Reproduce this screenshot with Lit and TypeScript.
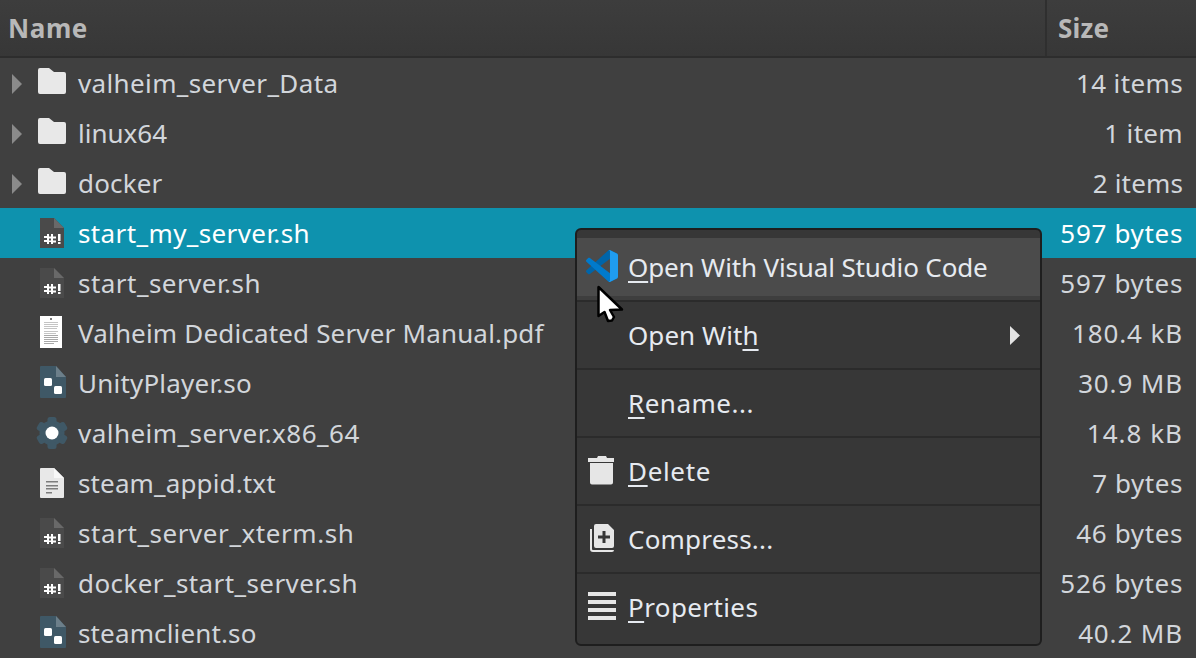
import { LitElement, html, css, svg } from 'lit';
import { customElement } from 'lit/decorators.js';

type IconName = 'folder' | 'script' | 'pdf' | 'lib' | 'exec' | 'text';

interface FileRow {
  name: string;
  size: string;
  icon: IconName;
  // hinted glyph advances in the original run a bit wider, tracked per row
  nameTrack: number;
  sizeTrack: number;
  selected?: boolean;
}

const rows: FileRow[] = [
  { name: 'valheim_server_Data', size: '14 items', icon: 'folder', nameTrack: 0.37, sizeTrack: 0.37 },
  { name: 'linux64', size: '1 item', icon: 'folder', nameTrack: 0, sizeTrack: 0.33 },
  { name: 'docker', size: '2 items', icon: 'folder', nameTrack: 0.15, sizeTrack: 0.14 },
  { name: 'start_my_server.sh', size: '597 bytes', icon: 'script', nameTrack: 0.39, sizeTrack: 0.67, selected: true },
  { name: 'start_server.sh', size: '597 bytes', icon: 'script', nameTrack: 0.47, sizeTrack: 0.67 },
  { name: 'Valheim Dedicated Server Manual.pdf', size: '180.4 kB', icon: 'pdf', nameTrack: 0.17, sizeTrack: 0.87 },
  { name: 'UnityPlayer.so', size: '30.9 MB', icon: 'lib', nameTrack: 0.2, sizeTrack: 0.86 },
  { name: 'valheim_server.x86_64', size: '14.8 kB', icon: 'exec', nameTrack: 0.47, sizeTrack: 1 },
  { name: 'steam_appid.txt', size: '7 bytes', icon: 'text', nameTrack: 0.13, sizeTrack: 0.57 },
  { name: 'start_server_xterm.sh', size: '46 bytes', icon: 'script', nameTrack: 0.57, sizeTrack: 0.62 },
  { name: 'docker_start_server.sh', size: '526 bytes', icon: 'script', nameTrack: 0.41, sizeTrack: 0.67 },
  { name: 'steamclient.so', size: '40.2 MB', icon: 'lib', nameTrack: 0.14, sizeTrack: 0.86 },
];

// drawn in row coordinates: x is page x, y is relative to a 32px box centred in the row
const fileIcons: Record<IconName, ReturnType<typeof svg>> = {
  folder: svg`<path fill="#e8e8e8" d="M38 3a2 2 0 0 1 2-2h9l5 4h10a2 2 0 0 1 2 2v18a2 2 0 0 1-2 2H40a2 2 0 0 1-2-2z"/>`,
  script: svg`
    <path fill="#4a4a4a" d="M40 1h14l10 10v20H40z"/>
    <path fill="#696969" d="M54 1l10 10H54z"/>
    <path fill="#fff" d="M47 17h2v2.500h2V17h2v2.500h3v2h-3v2h3v2h-3V27h-2v-2h-2v2h-2v-2h-3v-2h3v-2h-3v-2h3zm2 4.500v2h2v-2zM58 17h2.500v7H58zM58 25h2.500v2H58z"/>`,
  pdf: svg`
    <path fill="#fff" d="M40-1h22v32H40z"/>
    <path fill="#777" d="M50 1h2v2h-2z"/>
    <path fill="#c4c4c4" d="M44 5h14v1H44zM44 7h14v1H44zM44 9h14v1H44zM44 11h13v1H44zM44 14h14v1H44zM44 16h12v1H44z"/>
    <path fill="#a8a8a8" d="M44 18h14v1H44zM44 20h14v1H44zM44 22h14v1H44zM44 24h14v1H44zM44 26h10v1H44z"/>`,
  lib: svg`
    <path fill="#3f5866" d="M41-1h15l10 11v20a1 1 0 0 1-1 1H41a1 1 0 0 1-1-1V0a1 1 0 0 1 1-1z"/>
    <path fill="#6c7f8a" d="M56-1l10 11H56z"/>
    <rect fill="#fff" x="44" y="11" width="8" height="8" rx="1.500"/>
    <rect fill="#fff" x="54" y="19" width="8" height="8" rx="1.500"/>`,
  exec: svg`
    <g transform="translate(52 16)">
      <circle r="12.500" fill="#3f5866"/>
      ${[0, 60, 120, 180, 240, 300].map(
        (a) => svg`<rect x="-4.500" y="-16" width="9" height="7" rx="2.500" fill="#3f5866" transform="rotate(${a})"/>`
      )}
      <circle r="6.500" fill="#fff"/>
    </g>`,
  text: svg`
    <path fill="#e8e8e8" d="M41 1h13l10 10v19a1 1 0 0 1-1 1H41a1 1 0 0 1-1-1V2a1 1 0 0 1 1-1z"/>
    <path fill="#f8f8f8" d="M54 1l10 10H54z"/>
    <path fill="#7c7c7c" d="M46 14h12v1.500H46zM46 18h12v1.500H46zM46 21h12v1.500H46zM46 25h6v1.500h-6z"/>`,
};

@customElement('app-root')
export class AppRoot extends LitElement {
  static styles = css`
    :host {
      display: block;
      position: relative;
      width: 1196px;
      height: 658px;
      overflow: hidden;
      background: #404040;
      font-family: 'Noto Sans', 'Open Sans', sans-serif;
      font-size: 26px;
      color: #d3dae3;
    }

    .header {
      display: flex;
      height: 56px;
      background: linear-gradient(#3d3d3d, #373737);
      border-bottom: 2px solid #2d2d2d;
      color: #b8b8b8;
      font-weight: 700;
      line-height: 56px;
    }

    .head-name {
      flex: 1;
      padding-left: 8px;
      letter-spacing: 0.6px;
    }

    .head-size {
      width: 151px;
      padding-left: 11px;
      box-sizing: border-box;
      border-left: 2px solid #2f2f2f;
      letter-spacing: 0.2px;
    }

    .row {
      display: flex;
      align-items: center;
      height: 50px;
      color: #d2d6db;
    }

    .row.selected {
      background: #0e92ae;
      color: #ffffff;
    }

    .twisty {
      flex: none;
      width: 22px;
      display: flex;
      padding-left: 12px;
      box-sizing: border-box;
    }

    .arrow {
      width: 10px;
      height: 20px;
      margin-top: 2px;
      background: #8a8a8a;
      clip-path: polygon(0 0, 100% 50%, 0 100%);
    }

    .icon {
      flex: none;
      width: 56px;
      height: 32px;
      overflow: visible;
    }

    .row-name {
      flex: 1;
      padding-bottom: 0;
      white-space: nowrap;
    }

    .row-size {
      padding-right: 13px;
      white-space: nowrap;
    }

    .menu {
      position: absolute;
      left: 575px;
      top: 228px;
      width: 467px;
      height: 418px;
      box-sizing: border-box;
      padding-top: 8px;
      background: #373737;
      border: 2px solid #1e1e1e;
      border-radius: 6px;
      color: #e6eaf0;
    }

    .item {
      position: relative;
      display: flex;
      align-items: center;
      height: 66px;
      padding-left: 51px;
      border-bottom: 2px solid #2b2b2b;
      white-space: nowrap;
    }

    .item:last-child {
      border-bottom: none;
    }

    .item.hover {
      height: 62px;
      background: linear-gradient(#4b4b4b 58px, #3e3e3e 58px);
    }

    .item.hover > span {
      margin-bottom: 4px;
    }

    u {
      text-underline-offset: 4px;
      text-decoration-thickness: 2px;
    }

    .item-icon {
      position: absolute;
      left: 8px;
      top: 50%;
      width: 34px;
      height: 34px;
      margin-top: -17px;
    }

    .vscode {
      position: absolute;
      left: 9px;
      top: 12px;
      width: 32px;
      height: 32px;
    }

    .sub {
      position: absolute;
      right: 20px;
      top: 50%;
      width: 10px;
      height: 19px;
      margin-top: -9px;
      background: #e4e4e4;
      clip-path: polygon(0 0, 100% 50%, 0 100%);
    }

    .cursor {
      position: absolute;
      left: 594px;
      top: 283px;
      width: 34px;
      height: 42px;
    }
  `;

  render() {
    return html`
      <div class="header">
        <div class="head-name">Name</div>
        <div class="head-size">Size</div>
      </div>
      ${rows.map((r) => this._row(r))}
      <div class="menu">
        <div class="item hover">
          <svg class="vscode" viewBox="0 0 100 100">
            <path fill="#0065a9" d="M96.500 10.800 75.900.9c-2.400-1.100-5.200-.6-7.100 1.200L1.400 63.600c-1.800 1.700-1.800 4.500 0 6.100l5.500 5c1.500 1.300 3.700 1.400 5.300.2L93.400 13.200c2.700-2 6.600-.1 6.600 3.200v-.2c0-2.300-1.300-4.500-3.500-5.400z"/>
            <path fill="#007acc" d="M96.500 89.200 75.900 99.100c-2.400 1.100-5.200.6-7.100-1.200L1.400 36.400c-1.800-1.700-1.800-4.500 0-6.100l5.500-5c1.500-1.300 3.700-1.400 5.300-.2l81.200 61.700c2.700 2 6.600.1 6.600-3.200v.2c0 2.300-1.300 4.500-3.500 5.400z"/>
            <path fill="#1f9cf0" d="M75.900 99.100c-2.400 1.100-5.200.6-7.100-1.200 2.300 2.300 6.100.7 6.100-2.500V4.600c0-3.200-3.900-4.800-6.100-2.500 1.900-1.900 4.700-2.300 7.100-1.200l20.600 9.900c2.200 1 3.500 3.200 3.500 5.600v67.200c0 2.400-1.400 4.600-3.500 5.600z"/>
          </svg>
          <span style="letter-spacing:-0.14px"><u>O</u>pen With Visual Studio Code</span>
        </div>
        <div class="item">
          <span style="letter-spacing:0.05px">Open Wit<u>h</u></span>
          <span class="sub"></span>
        </div>
        <div class="item"><span style="letter-spacing:0.5px"><u>R</u>ename...</span></div>
        <div class="item">
          <svg class="item-icon" viewBox="0 0 34 34">
            <path fill="#e6e6e6" d="M13 2h8l1 2h7v4H3V4h9zM5 9h23v19.500a2 2 0 0 1-2 2H7a2 2 0 0 1-2-2z"/>
          </svg>
          <span style="letter-spacing:0.67px"><u>D</u>elete</span>
        </div>
        <div class="item">
          <svg class="item-icon" viewBox="0 0 34 34">
            <path fill="#e6e6e6" d="M5 7h2v20a1 1 0 0 0 1 1h21a2 2 0 0 1-2 2H8a3 3 0 0 1-3-3z"/>
            <path fill="#e6e6e6" fill-rule="evenodd" d="M11 2h12l6 6v16a2 2 0 0 1-2 2H11a2 2 0 0 1-2-2V4a2 2 0 0 1 2-2zm6.500 7v4.500H13v3h4.500V21h3v-4.500H25v-3h-4.500V9z"/>
          </svg>
          <span style="letter-spacing:0.2px">Compress...</span>
        </div>
        <div class="item">
          <svg class="item-icon" viewBox="0 0 34 34">
            <path fill="#e6e6e6" d="M3 2h28v4H3zM3 10h28v4H3zM3 18h28v4H3zM3 26h28v4H3z"/>
          </svg>
          <span style="letter-spacing:0.4px"><u>P</u>roperties</span>
        </div>
      </div>
      <svg class="cursor" viewBox="0 0 34 42">
        <path fill="#fff" stroke="#000" stroke-width="2.500" stroke-linejoin="round" d="M4.500 4v29l6-4 3.500 9 4-.5 2-3.500-4-7 12-.5z"/>
      </svg>
    `;
  }

  private _row(r: FileRow) {
    return html`
      <div class="row ${r.selected ? 'selected' : ''}">
        <div class="twisty">
          ${r.icon === 'folder' ? html`<div class="arrow"></div>` : null}
        </div>
        <svg class="icon" viewBox="22 0 56 32">${fileIcons[r.icon]}</svg>
        <div class="row-name" style="letter-spacing:${r.nameTrack}px">${r.name}</div>
        <div class="row-size" style="letter-spacing:${r.sizeTrack}px">${r.size}</div>
      </div>
    `;
  }
}
